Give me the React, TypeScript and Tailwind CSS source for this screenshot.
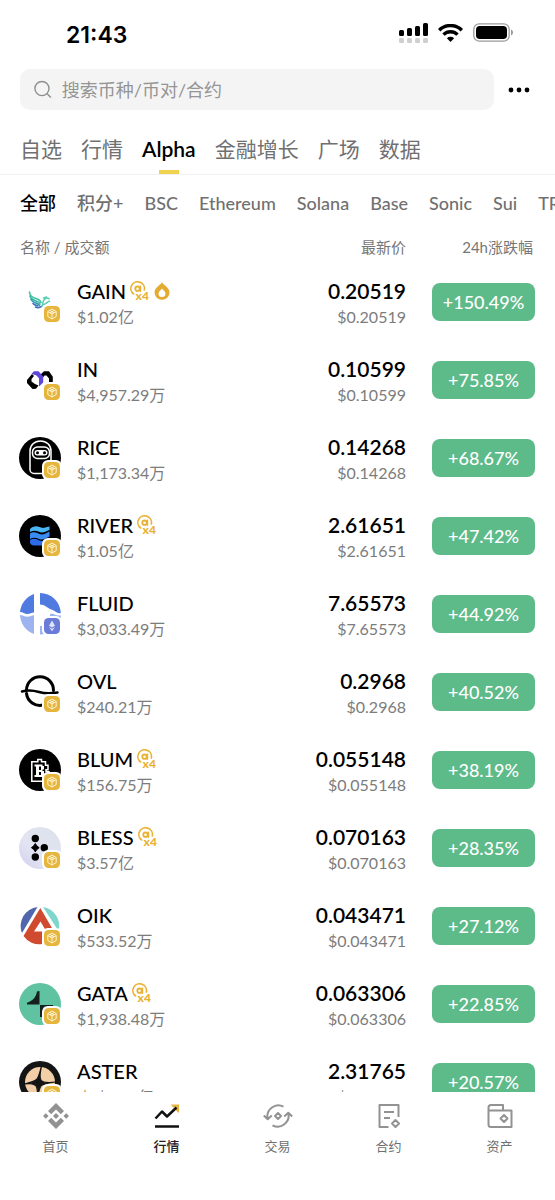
import type { ReactNode } from 'react';

type Coin = {
  symbol: string;
  volume: string;
  price: string;
  change: string;
  chain: 'bnb' | 'eth';
  boosted?: boolean;
  hot?: boolean;
  starred?: boolean;
  logo: ReactNode;
};

const tabs = ['自选', '行情', 'Alpha', '金融增长', '广场', '数据'];
const filters = ['全部', '积分+', 'BSC', 'Ethereum', 'Solana', 'Base', 'Sonic', 'Sui', 'TRON'];

function GainLogo() {
  return (
    <g fill="none" strokeLinecap="round" strokeWidth="1.6">
      <path d="M10.500 11c0 4 3 5.500 6.500 6.500s4.500 2.500 5 4" stroke="#43c59e" />
      <path d="M11 15c.8 3 3.500 4.200 6 5s3.500 1.800 4 3" stroke="#35b3a6" />
      <path d="M12 18.500c1.200 2.500 3.200 3 5 3.600s2.800 1.300 3.400 2.400" stroke="#2f96b0" />
      <path d="M14 22.500c1.400 1.600 2.800 1.800 4.400 2.200M16.500 26c2 .9 4.500.5 6-.7" stroke="#3a6fb5" />
      <path d="M23 25c1-1.500.5-4 2-6 1.200-1.800 3.500-2.600 5-1.200M25 23.500c2-.2 2.500-2.500 5.500-3.200M24.500 17l3-1" stroke="#5fcfb5" />
    </g>
  );
}

function InLogo() {
  return (
    <>
      <path d="M13 15l-5 6v3l5.500 6 3.500-.2 2.500-3.300-3.500-1.500-3.500-2.500v-2.500l2.500-3z" />
      <path d="M21.500 15.500l3.500-3.200h5l3.800 5.500V23H30v-3.500l-2.500-3H25.500l-1.500 2z" />
      <path d="M12.500 14.800l2.500-2.500h4.500l4.700 5.200v6L20 27.500v-8.200l-2.500-2.800z" fill="#5f46d8" />
    </>
  );
}

function RiceLogo() {
  return (
    <>
      <circle cx="21" cy="21" r="21" />
      <g fill="none" stroke="#fff" strokeWidth="1.500">
        <path d="M26 36.500H15a4 4 0 0 1-4-4V14c0-6 4.500-10 10.500-10S32 8 32 14v14" />
        <rect x="13.500" y="10" width="17" height="11.500" rx="5" />
      </g>
      <rect x="15.500" y="13" width="13" height="5.500" rx="2.750" fill="#fff" />
      <circle cx="18.500" cy="15.700" r="1.500" />
      <circle cx="25.500" cy="15.700" r="1.500" />
    </>
  );
}

function RiverLogo() {
  return (
    <>
      <circle cx="21" cy="21" r="21" />
      <path d="M14 12c5-2 7 1.500 11 .8 2-.3 4-1.300 5.500-1.300V15c-4 1.500-7 3.500-10.500 1.800C17 15.500 14 15 11 17v-2c0-1.500 1-2.500 3-3z" fill="#4cb5f5" />
      <path d="M11 18.500c4-2.500 7-.5 9.500.5 3.500 1.300 6.500-.5 10-2.500v5c-3.500 2-7 4-10.500 2.500-3-1.300-6-2-9 0z" fill="#3a8bf2" />
      <path d="M11 25c4-2.500 7-.5 9.500.5 3.500 1.300 6.500-.5 10-2.500v4c0 2-1.500 3.500-3.500 3.500H15c-2.500 0-4-1.500-4-3.500z" fill="#2e6be8" />
    </>
  );
}

function FluidLogo() {
  return (
    <>
      <path d="M15 1v18.500c-2.500 0-4 1.500-6.500 1.500-3 0-4.500-2-7.500-2A21 21 0 0 1 15 1z" fill="#4f7be0" />
      <path d="M1 22c3 0 4.500 1.800 7.500 1.800 2.500 0 4-1.500 6.500-1.500V41A21 21 0 0 1 1 22z" fill="#9db4f0" />
      <path d="M21 0a21 21 0 0 1 20.800 20c-3.500 1-5.500-2-9.500-3.500S27 12 21 11.500z" fill="#4f7be0" />
      <path d="M31 21c4-1.500 6 2.500 10.800 1.200V25H31zM21 33v8.500c7 0 12-3 16-8z" fill="#9db4f0" />
    </>
  );
}

function OvlLogo() {
  return (
    <g fill="none" stroke="#000" strokeWidth="3" strokeLinecap="round">
      <path d="M7.500 19a13.500 13.500 0 0 1 27 .5" />
      <path d="M7.500 22.500A13.500 13.500 0 0 0 24 34" />
      <path d="M3 20.500c5.500-1.500 10-1.500 17 .5s12 1.500 18.500.5" strokeWidth="2.500" />
    </g>
  );
}

function BlumLogo() {
  return (
    <>
      <circle cx="21" cy="21" r="21" />
      <path
        d="M12.800 12.800h6V10.500h3.700v2.300h4v3.500h2.500v4.500h-2v2h3v7h-3v2.500H12.800V27h0z"
        fill="none"
        stroke="#fff"
        strokeWidth="1.500"
      />
      <path
        d="M15.500 15.500h8v1.500h1.500v3.500h-1.500v1.500H25v6h-9.500v-2H17v-8.500h-1.500zM20 17.500V21h2v-3.500zM20 23v3h2v-3z"
        fill="#fff"
        fillRule="evenodd"
      />
    </>
  );
}

function BlessLogo() {
  return (
    <>
      <defs>
        <linearGradient id="bless-bg" x1="1" y1="0" x2="0" y2="1">
          <stop offset="0" stopColor="#dbe2ea" />
          <stop offset=".6" stopColor="#e3e4f2" />
          <stop offset="1" stopColor="#cfd0ee" />
        </linearGradient>
      </defs>
      <circle cx="21" cy="21" r="21" fill="url(#bless-bg)" />
      <circle cx="16.300" cy="11.500" r="3.700" />
      <path d="M16.300 16.500l1.500 2.300 2.400 1.900-2.400 1.900-1.500 2.300-1.500-2.300-2.400-1.900 2.400-1.900z" strokeWidth="1" stroke="#000" />
      <circle cx="16.300" cy="30" r="3.700" />
      <circle cx="25.300" cy="20.700" r="3.700" />
    </>
  );
}

function OikLogo() {
  return (
    <>
      <path d="M18.500 2L3 28A19 19 0 0 1 18.500 2z" fill="#5166ad" />
      <path d="M24 2l15.500 24A19 19 0 0 0 24 2z" fill="#7fd6cd" />
      <path d="M21.300 3L37 30l-4 6-11.500-19.500-6.500 10h8V39A19 19 0 0 1 4.500 31z" fill="#cf4a2f" />
    </>
  );
}

function GataLogo() {
  return (
    <>
      <circle cx="21" cy="21" r="21" fill="#5fc2a0" />
      <path d="M18 8.500l2.500-.5v13.500H8v-1.800C13.500 18 17 14.500 18 8.500z" fill="#15201f" />
      <path d="M21 34V22h13v1.800H25c-1 2.500-1.500 6-2 10.200z" fill="#15201f" />
    </>
  );
}

function AsterLogo() {
  return (
    <>
      <circle cx="21" cy="21" r="21" fill="#141414" />
      <circle cx="21" cy="21" r="15" fill="#f3cfa8" />
      <path d="M22.500 5c-1.500 8-2.500 11-.5 14s7 3 15 2c-9 1-13 1.500-15 4s-2.500 6-3.500 12c0-6 .5-9.500-1.500-12S12 22.500 5 23c7-1.500 10-2 12.500-4.500S20.500 12 22.500 5z" fill="#141414" stroke="#141414" strokeWidth="1.200" />
    </>
  );
}

const coins: Coin[] = [
  { symbol: 'GAIN', volume: '$1.02亿', price: '0.20519', change: '+150.49%', chain: 'bnb', boosted: true, hot: true, logo: <GainLogo /> },
  { symbol: 'IN', volume: '$4,957.29万', price: '0.10599', change: '+75.85%', chain: 'bnb', logo: <InLogo /> },
  { symbol: 'RICE', volume: '$1,173.34万', price: '0.14268', change: '+68.67%', chain: 'bnb', logo: <RiceLogo /> },
  { symbol: 'RIVER', volume: '$1.05亿', price: '2.61651', change: '+47.42%', chain: 'bnb', boosted: true, logo: <RiverLogo /> },
  { symbol: 'FLUID', volume: '$3,033.49万', price: '7.65573', change: '+44.92%', chain: 'eth', logo: <FluidLogo /> },
  { symbol: 'OVL', volume: '$240.21万', price: '0.2968', change: '+40.52%', chain: 'bnb', logo: <OvlLogo /> },
  { symbol: 'BLUM', volume: '$156.75万', price: '0.055148', change: '+38.19%', chain: 'bnb', boosted: true, logo: <BlumLogo /> },
  { symbol: 'BLESS', volume: '$3.57亿', price: '0.070163', change: '+28.35%', chain: 'bnb', boosted: true, logo: <BlessLogo /> },
  { symbol: 'OIK', volume: '$533.52万', price: '0.043471', change: '+27.12%', chain: 'bnb', logo: <OikLogo /> },
  { symbol: 'GATA', volume: '$1,938.48万', price: '0.063306', change: '+22.85%', chain: 'bnb', boosted: true, logo: <GataLogo /> },
  { symbol: 'ASTER', volume: '$3.91亿', price: '2.31765', change: '+20.57%', chain: 'bnb', starred: true, logo: <AsterLogo /> },
];

function StatusBar() {
  return (
    <div className="flex h-[69px] shrink-0 items-center justify-between pr-[42px] pl-[66px]">
      <span className="font-['Inter','Liberation_Sans',sans-serif] text-[23px] leading-7 font-semibold">21:43</span>
      <div className="flex items-center gap-[10px] pb-1">
        <svg width="29" height="20" viewBox="0 0 29 20">
          <rect x="0" y="7" width="5" height="6" rx="1.500" />
          <rect x="8" y="5" width="5" height="8" rx="1.500" />
          <rect x="16" y="3" width="5" height="10" rx="1.500" />
          <rect x="24" y="0" width="5" height="13" rx="1.500" />
          <g fill="#cfcfcf">
            <rect x="0" y="15" width="5" height="5" rx="1.500" />
            <rect x="8" y="15" width="5" height="5" rx="1.500" />
            <rect x="16" y="15" width="5" height="5" rx="1.500" />
            <rect x="24" y="15" width="5" height="5" rx="1.500" />
          </g>
        </svg>
        <svg width="25" height="18" viewBox="0 0 25 18" fill="none" stroke="#000" strokeWidth="3.400">
          <path d="M1.200 6.200a16 16 0 0 1 22.600 0" />
          <path d="M5.500 10.600a10 10 0 0 1 14 0" />
          <path d="M12.500 18l-3.600-3.800a5.300 5.300 0 0 1 7.200 0z" fill="#000" stroke="none" />
        </svg>
        <svg width="40" height="19" viewBox="0 0 40 19">
          <rect x=".8" y=".8" width="35.400" height="17.400" rx="5.500" fill="none" stroke="#9a9a9a" strokeWidth="1.300" />
          <rect x="3" y="3" width="31" height="13" rx="3.800" />
          <path d="M38 6.500v6c1.300-.6 2-1.700 2-3s-.7-2.400-2-3z" fill="#9a9a9a" />
        </svg>
      </div>
    </div>
  );
}

function SearchBar() {
  return (
    <div className="flex shrink-0 items-center gap-[9px] pr-5 pl-5">
      <label className="flex h-[41px] flex-1 items-center gap-[10px] rounded-[10px] bg-[#f4f4f4] px-[14px]">
        <svg width="19" height="19" viewBox="0 0 19 19" fill="none" stroke="#8f8f8f" strokeWidth="1.500">
          <circle cx="8.500" cy="8.500" r="7.500" />
          <path d="M14 14l4 4" />
        </svg>
        <input
          type="search"
          aria-label="搜索"
          placeholder="搜索币种/币对/合约"
          className="w-full bg-transparent text-[18px] leading-6 outline-none placeholder:text-[#959595]"
        />
      </label>
      <button type="button" aria-label="更多" className="px-1 py-2">
        <svg width="24" height="6" viewBox="0 0 24 6">
          <circle cx="4" cy="3" r="2.400" />
          <circle cx="12" cy="3" r="2.400" />
          <circle cx="20" cy="3" r="2.400" />
        </svg>
      </button>
    </div>
  );
}

function BoostBadge() {
  return (
    <svg width="20" height="20" viewBox="0 0 20 20" fill="none" stroke="#eab234" strokeWidth="1.600" strokeLinecap="round">
      <path d="M3.600 13A6.800 6.800 0 1 1 14.300 9" />
      <circle cx="7.500" cy="7.700" r="2.200" strokeWidth="1.800" />
      <path d="M10.300 5.500v4.500" strokeWidth="1.800" />
      <text x="5.500" y="18.500" fill="#eab234" stroke="none" fontSize="12" fontWeight="900" fontFamily="Lato, sans-serif">
        x4
      </text>
    </svg>
  );
}

function FlameIcon() {
  return (
    <svg width="16" height="18" viewBox="0 0 16 18">
      <path
        d="M8 0c.5 2.500 7.500 5 7.500 10.500A7.300 7.300 0 0 1 8 17.800 7.300 7.300 0 0 1 .5 10.500C.5 5 7.500 2.500 8 0zM8 6.500c-.7 1.500-3.500 2.800-3.500 5a3.500 3.500 0 0 0 7 0c0-2.200-2.800-3.500-3.500-5z"
        fill="#e3ab32"
        fillRule="evenodd"
      />
    </svg>
  );
}

function ChainBadge({ chain }: { chain: Coin['chain'] }) {
  if (chain === 'eth') {
    return (
      <svg width="20" height="20" viewBox="0 0 20 20" className="absolute -right-px -bottom-px">
        <rect width="20" height="20" rx="6" fill="#fff" />
        <rect x="2" y="2" width="16" height="16" rx="4.500" fill="#6a7bd8" />
        <path d="M10 4.500l3 5.200-3 1.800-3-1.800zM7 10.900l3 1.800 3-1.800-3 4.400z" fill="#dfe4fb" />
      </svg>
    );
  }
  return (
    <svg width="20" height="20" viewBox="0 0 20 20" className="absolute -right-px -bottom-px">
      <rect width="20" height="20" rx="6" fill="#fff" />
      <rect x="2" y="2" width="16" height="16" rx="4.500" fill="#e5b53e" />
      <path
        d="M10 5l4.200 2.500v5L10 15l-4.200-2.500v-5zM5.800 7.500L10 10l4.200-2.500M10 10v5M8 6.500L12 9M12 6.500L8 9"
        fill="none"
        stroke="#fff4d2"
        strokeWidth="1"
      />
    </svg>
  );
}

function CoinRow({ coin }: { coin: Coin }) {
  return (
    <tr className="h-[78px]">
      <td className="pl-[19px]">
        <div className="flex items-center gap-4">
          <div className="relative size-[42px] shrink-0">
            <svg width="42" height="42" viewBox="0 0 42 42">
              {coin.logo}
            </svg>
            <ChainBadge chain={coin.chain} />
          </div>
          <div className="pt-1">
            <div className="flex h-[26px] items-center gap-1">
              <span className="text-xl leading-[26px] font-medium">{coin.symbol}</span>
              {coin.boosted && <BoostBadge />}
              {coin.hot && <FlameIcon />}
            </div>
            <div className="flex items-center gap-1 text-base leading-[26px] text-[#7c7c7c]">
              {coin.starred && (
                <svg width="16" height="16" viewBox="0 0 16 16" fill="#e3ab32">
                  <path d="M8 0l2 5.500L16 8l-6 2.500L8 16l-2-5.500L0 8l6-2.500z" />
                </svg>
              )}
              {coin.volume}
            </div>
          </div>
        </div>
      </td>
      <td className="pt-1 text-right">
        <div className="text-[21px] leading-[26px] font-semibold">{coin.price}</div>
        <div className="text-base leading-[26px] text-[#7c7c7c]">${coin.price}</div>
      </td>
      <td className="w-[149px] pr-5 pl-[26px]">
        <div className="h-[38px] rounded-lg bg-[#5dba89] text-center text-lg leading-[38px] font-medium text-white">
          {coin.change}
        </div>
      </td>
    </tr>
  );
}

function NavItem({ label, active, children }: { label: string; active?: boolean; children: ReactNode }) {
  return (
    <a
      href="#"
      aria-current={active ? 'page' : undefined}
      className={`flex flex-1 flex-col items-center gap-[7px] text-[13px] leading-5 ${
        active ? 'font-medium text-[#1e2026]' : 'text-[#6f6f6f]'
      }`}
    >
      <svg width="30" height="26" viewBox="0 0 30 26" fill="none" stroke="#929292" strokeWidth="2" strokeLinejoin="round">
        {children}
      </svg>
      {label}
    </a>
  );
}

function BottomNav() {
  return (
    <nav className="flex h-[108px] shrink-0 bg-white pt-[11px]">
      <NavItem label="首页">
        <g fill="#929292" stroke="none">
          <path d="M15 0l8 8-3.200 3.200L15 6.400l-4.800 4.800L7 8zM15 26l8-8-3.200-3.200-4.800 4.800-4.800-4.800L7 18z" />
          <path d="M15 10l3 3-3 3-3-3zM4.800 10.200l2.800 2.800-2.800 2.800L2 13zM25.200 10.200L28 13l-2.800 2.800-2.800-2.800z" />
        </g>
      </NavItem>
      <NavItem label="行情" active>
        <path d="M19 1.500h8V10l-3-2.500V4.500H21z" fill="#e3b340" stroke="none" />
        <path d="M3.500 15.500l6.500-7 5 5 9.500-9" stroke="#111" strokeWidth="2.500" />
        <path d="M3 23.500h24" stroke="#111" strokeWidth="2.500" />
      </NavItem>
      <NavItem label="交易">
        <path d="M20.500 3.700A11 11 0 0 0 4.700 16M.8 12.500l3.900 3.700 4.100-3.700" />
        <path d="M9.500 22.300A11 11 0 0 0 25.300 10M21.200 13.500l4.100-3.700 3.900 3.700" />
        <path d="M15 10l3 3-3 3-3-3z" />
      </NavItem>
      <NavItem label="合约">
        <path d="M14.500 24H5.500V2h19v12M10 9h10M10 15h6" />
        <path d="M21.500 17l3.500 3.500-3.500 3.500-3.500-3.500z" />
      </NavItem>
      <NavItem label="资产">
        <path d="M3.500 8V4.500A2.500 2.500 0 0 1 6 2h12v5.500M3.500 7.500h23V24H6a2.500 2.500 0 0 1-2.500-2.500z" />
        <path d="M19 12l3.500 3.500L19 19l-3.500-3.500z" />
      </NavItem>
    </nav>
  );
}

export default function App() {
  return (
    <main className="flex h-screen flex-col overflow-hidden bg-white font-['Lato','Noto_Sans_CJK_SC',sans-serif] text-black">
      <StatusBar />
      <SearchBar />

      <nav className="flex h-[65px] shrink-0 gap-[19px] overflow-hidden border-b border-[#f0f0f0] pt-[23px] pl-5 text-[21px] leading-8 whitespace-nowrap text-[#707070]">
        {tabs.map((tab) => (
          <button
            key={tab}
            type="button"
            className={`flex flex-col items-center justify-between ${tab === 'Alpha' ? 'font-semibold text-black' : ''}`}
          >
            {tab}
            {tab === 'Alpha' && <span className="h-1 w-5 bg-[#efd24e]" />}
          </button>
        ))}
      </nav>

      <div className="flex shrink-0 gap-[21px] overflow-hidden pt-[14px] pl-5 text-lg leading-7 font-medium whitespace-nowrap text-[#707070]">
        {filters.map((filter) => (
          <button key={filter} type="button" className={filter === '全部' ? 'text-black' : ''}>
            {filter}
          </button>
        ))}
      </div>

      <div className="min-h-0 flex-1 overflow-y-auto [scrollbar-width:none]">
        <table className="w-full border-collapse">
          <thead className="text-[15px] leading-6 text-[#767676]">
            <tr className="h-[46px]">
              <th className="pt-[14px] pl-5 text-left font-normal">名称 / 成交额</th>
              <th className="pt-[14px] text-right font-normal">最新价</th>
              <th className="pt-[14px] pr-[22px] text-right font-normal">24h涨跌幅</th>
            </tr>
          </thead>
          <tbody>
            {coins.map((coin) => (
              <CoinRow key={coin.symbol} coin={coin} />
            ))}
          </tbody>
        </table>
      </div>

      <BottomNav />
    </main>
  );
}
